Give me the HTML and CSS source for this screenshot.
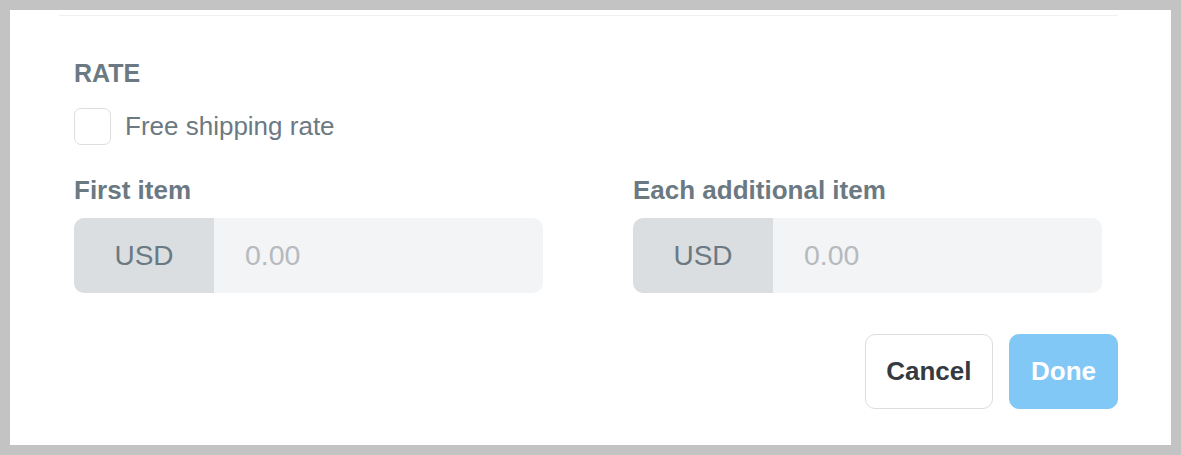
FILE: index.html
```html
<!DOCTYPE html>
<html>
<head>
    <meta http-equiv="Content-Type" content="text/html; charset=utf-8"/>
    <title>Shipping rate</title>
    <link rel="stylesheet" href="styles.css">
</head>
<body>
<div class="panel">
    <div class="divider"></div>
    <div class="form">
        <div class="section-title">RATE</div>
        <label class="check-row">
            <input type="checkbox" class="check">
            <span>Free shipping rate</span>
        </label>
        <div class="fields">
            <div class="field">
                <div class="field-label">First item</div>
                <div class="money">
                    <span class="money-unit">USD</span>
                    <input type="text" class="money-input" placeholder="0.00">
                </div>
            </div>
            <div class="field">
                <div class="field-label">Each additional item</div>
                <div class="money">
                    <span class="money-unit">USD</span>
                    <input type="text" class="money-input" placeholder="0.00">
                </div>
            </div>
        </div>
    </div>
    <div class="actions">
        <button class="btn btn-cancel">Cancel</button>
        <button class="btn btn-done">Done</button>
    </div>
</div>
</body>
</html>
```

FILE: styles.css
```css
* {
    margin: 0;
    padding: 0;
    box-sizing: border-box;
}

html, body {
    height: 100%;
}

body {
    background: #c3c3c3;
    padding: 10px;
    font-family: "Liberation Sans", Arial, sans-serif;
    overflow: hidden;
}

.panel {
    width: 1161px;
    height: 435px;
    background: #fff;
    padding: 5px 53px 0 49px;
}

.divider {
    height: 1px;
    background: #f0f0f0;
}

.form {
    padding: 45px 15px 0 15px;
}

.section-title {
    font-size: 25px;
    line-height: 24px;
    font-weight: bold;
    color: #6b7983;
}

.check-row {
    display: flex;
    align-items: center;
    gap: 14px;
    margin-top: 23px;
    font-size: 26px;
    color: #6b7983;
}

.check {
    appearance: none;
    -webkit-appearance: none;
    width: 37px;
    height: 37px;
    border: 1px solid #dedede;
    border-radius: 7px;
    background: #fff;
    flex-shrink: 0;
}

.fields {
    display: grid;
    grid-template-columns: 469px 469px;
    column-gap: 90px;
    margin-top: 32px;
}

.field-label {
    font-size: 26px;
    line-height: 26px;
    font-weight: bold;
    color: #6b7983;
}

.money {
    display: flex;
    height: 75px;
    margin-top: 15px;
    border-radius: 10px;
    overflow: hidden;
    background: #f3f4f6;
}

.money-unit {
    width: 140px;
    flex-shrink: 0;
    display: flex;
    align-items: center;
    justify-content: center;
    background: #dbdee1;
    color: #6b7983;
    font-size: 28px;
}

.money-input {
    flex: 1;
    min-width: 0;
    border: none;
    outline: none;
    background: transparent;
    padding: 0 31px;
    font-family: inherit;
    font-size: 28.5px;
    color: #6b7983;
}

.money-input::placeholder {
    color: #b6babe;
}

.actions {
    display: flex;
    justify-content: flex-end;
    gap: 16px;
    margin-top: 41px;
}

.btn {
    height: 75px;
    border-radius: 10px;
    font-family: inherit;
    font-size: 26px;
    font-weight: bold;
    padding: 0 20.5px;
    border: 1px solid transparent;
}

.btn-cancel {
    background: #fff;
    border-color: #dddddd;
    color: #343a40;
}

.btn-done {
    background: #82c8f6;
    border-color: #82c8f6;
    color: #fff;
    padding: 0 21px;
}
```
